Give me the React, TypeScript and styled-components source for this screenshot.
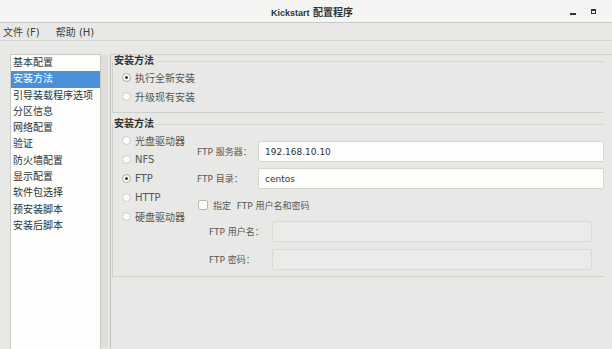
import React, { useState } from 'react';
import styled, { createGlobalStyle } from 'styled-components';

const NAV_ITEMS = [
  '基本配置',
  '安装方法',
  '引导装载程序选项',
  '分区信息',
  '网络配置',
  '验证',
  '防火墙配置',
  '显示配置',
  '软件包选择',
  '预安装脚本',
  '安装后脚本',
];

const SOURCES = ['光盘驱动器', 'NFS', 'FTP', 'HTTP', '硬盘驱动器'];

const GlobalStyle = createGlobalStyle`
  html, body {
    margin: 0;
    padding: 0;
    background: #e8e8e7;
  }
  body {
    font-family: 'DejaVu Sans', 'Noto Sans CJK SC', sans-serif;
    font-size: 10px;
    color: #2e3436;
  }
`;

const Radio = ({ checked, label }: { checked: boolean; label: string }) => (
  <RadioRow>
    <RadioDot checked={checked} />
    <span>{label}</span>
  </RadioRow>
);

const App = () => {
  const [selected, setSelected] = useState<string>('安装方法');
  const [source, setSource] = useState<string>('FTP');

  return (
    <Window>
      <GlobalStyle />
      <TitleBar>
        <Title>
          <TitleLatin>Kickstart</TitleLatin> 配置程序
        </Title>
        <WinButtons>
          <MinButton />
          <MaxButton />
        </WinButtons>
      </TitleBar>
      <MenuBar>
        <MenuItem>文件 (F)</MenuItem>
        <MenuItem>帮助 (H)</MenuItem>
      </MenuBar>
      <Body>
        <Sidebar>
          {NAV_ITEMS.map((item) => (
            <NavItem
              key={item}
              active={selected === item}
              onClick={() => setSelected(item)}
            >
              {item}
            </NavItem>
          ))}
        </Sidebar>
        <Main>
          <Frame>
            <Legend>安装方法</Legend>
            <RadioList>
              <Radio checked label="执行全新安装" />
              <Radio checked={false} label="升级现有安装" />
            </RadioList>
          </Frame>
          <Frame>
            <Legend>安装方法</Legend>
            <SourceLayout>
              <SourceList>
                {SOURCES.map((s) => (
                  <div key={s} onClick={() => setSource(s)}>
                    <Radio checked={source === s} label={s} />
                  </div>
                ))}
              </SourceList>
              <Form>
                <FieldRow>
                  <FieldLabel>FTP 服务器：</FieldLabel>
                  <TextInput defaultValue="192.168.10.10" />
                </FieldRow>
                <FieldRow>
                  <FieldLabel>FTP 目录：</FieldLabel>
                  <TextInput defaultValue="centos" />
                </FieldRow>
                <CheckRow>
                  <CheckBox />
                  <span>指定&nbsp; FTP 用户名和密码</span>
                </CheckRow>
                <SubForm>
                  <SubRow>
                    <SubLabel>FTP 用户名：</SubLabel>
                    <TextInput disabled />
                  </SubRow>
                  <SubRow>
                    <SubLabel>FTP 密码：</SubLabel>
                    <TextInput disabled />
                  </SubRow>
                </SubForm>
              </Form>
            </SourceLayout>
          </Frame>
        </Main>
      </Body>
    </Window>
  );
};

export default App;

const Window = styled.div`
  width: 612px;
  height: 349px;
  display: flex;
  flex-direction: column;
  overflow: hidden;
  background: #e8e8e7;
`;

const TitleBar = styled.div`
  position: relative;
  height: 22px;
  display: flex;
  align-items: center;
  justify-content: center;
  background: #f4f4f2;
  border-bottom: 1px solid #c9c9c6;
`;

const Title = styled.div`
  font-weight: bold;
  font-size: 10px;
  color: #2e3436;
  padding-left: 12px;
`;

const TitleLatin = styled.span`
  font-family: 'Liberation Sans', 'Noto Sans CJK SC', sans-serif;
  font-size: 9px;
`;

const WinButtons = styled.div`
  position: absolute;
  right: 16px;
  top: 0;
  height: 22px;
  display: flex;
  align-items: center;
  gap: 15px;
`;

const MinButton = styled.span`
  width: 6px;
  height: 2px;
  margin-top: 5px;
  background: #2e3436;
`;

const MaxButton = styled.span`
  width: 5px;
  height: 5px;
  border: 1px solid #2e3436;
  border-top-width: 2px;
  box-sizing: border-box;
  background: #f4f4f2;
`;

const MenuBar = styled.div`
  height: 17px;
  display: flex;
  align-items: center;
  gap: 16px;
  padding-left: 3px;
  border-bottom: 1px solid #d3d3d0;
  font-size: 10px;
`;

const MenuItem = styled.span`
  color: #3a3f41;
  white-space: pre;
`;

const Body = styled.div`
  flex: 1;
  display: flex;
  padding: 13px 0 0 10px;
  min-height: 0;
`;

const Sidebar = styled.div`
  width: 89px;
  margin-right: 9px;
  background: #fdfdfb;
  border: 1px solid #c9c9c6;
  border-bottom: none;
  box-shadow: 8px 0 0 -1px #dededc;
  display: flex;
  flex-direction: column;
`;

const NavItem = styled.div<{ active: boolean }>`
  height: 16.3px;
  line-height: 16.3px;
  padding-left: 2px;
  white-space: nowrap;
  cursor: pointer;
  background: ${({ active }) => (active ? '#4a90d9' : 'transparent')};
  color: ${({ active }) => (active ? '#ffffff' : '#2e3436')};
`;

const Main = styled.div`
  flex: 1;
  display: flex;
  flex-direction: column;
  gap: 5px;
  padding: 0 8px 0 1px;
  border-top: 1px solid #cfcfcc;
  border-left: 1px solid #c4c4c1;
`;

const Frame = styled.fieldset`
  margin: 0;
  padding: 0 0 6px 9px;
  border: 1px solid #cfcfcc;
  border-right: none;
  border-top-color: #d6d6d3;
  min-width: 0;
`;

const Legend = styled.legend`
  padding: 0 2px 0 1px;
  margin-left: -9px;
  font-size: 10px;
  font-weight: bold;
  color: #2e3436;
  line-height: 12px;
`;

const RadioList = styled.div`
  display: flex;
  flex-direction: column;
  margin-top: 1px;
`;

const RadioRow = styled.div`
  display: flex;
  align-items: center;
  gap: 4px;
  height: 19px;
  color: #555753;
  white-space: nowrap;
`;

const RadioDot = styled.span<{ checked: boolean }>`
  position: relative;
  width: 9px;
  height: 9px;
  border-radius: 50%;
  box-sizing: border-box;
  border: 1px solid ${({ checked }) => (checked ? '#a8a8a5' : '#cdcdca')};
  background: #fbfbfa;

  &::after {
    content: '';
    display: ${({ checked }) => (checked ? 'block' : 'none')};
    position: absolute;
    left: 2px;
    top: 2px;
    width: 3px;
    height: 3px;
    border-radius: 50%;
    background: #2e3436;
  }
`;

const SourceLayout = styled.div`
  display: flex;
  margin-top: 1px;
`;

const SourceList = styled.div`
  width: 75px;
  display: flex;
  flex-direction: column;
`;

const Form = styled.div`
  flex: 1;
  display: flex;
  flex-direction: column;
  padding-top: 10px;
`;

const FieldRow = styled.div`
  display: flex;
  align-items: center;
  margin-bottom: 6px;
`;

const FieldLabel = styled.span`
  width: 61px;
  flex-shrink: 0;
  color: #555753;
  font-size: 9px;
  white-space: nowrap;
`;

const TextInput = styled.input`
  flex: 1;
  min-width: 0;
  height: 21px;
  box-sizing: border-box;
  padding: 0 6px;
  font-family: 'DejaVu Sans', 'Noto Sans CJK SC', sans-serif;
  font-size: 9px;
  color: #2e3436;
  background: #fdfdfc;
  border: 1px solid #d5d5d2;
  border-radius: 2px;
  outline: none;

  &:disabled {
    background: #ebebe9;
    border-color: #d9d9d6;
  }
`;

const CheckRow = styled.div`
  display: flex;
  align-items: center;
  gap: 5px;
  height: 22px;
  margin: -1px 0 5px 1px;
  color: #555753;
  font-size: 9px;
  white-space: nowrap;
`;

const CheckBox = styled.span`
  width: 10px;
  height: 10px;
  box-sizing: border-box;
  border: 1px solid #b8b8b5;
  border-radius: 2px;
  background: #fbfbfa;
`;

const SubForm = styled.div`
  display: flex;
  flex-direction: column;
  gap: 7px;
  padding: 0 12px 0 12px;
`;

const SubRow = styled.div`
  display: flex;
  align-items: center;
`;

const SubLabel = styled.span`
  width: 63px;
  flex-shrink: 0;
  color: #555753;
  font-size: 9px;
  white-space: nowrap;
`;
